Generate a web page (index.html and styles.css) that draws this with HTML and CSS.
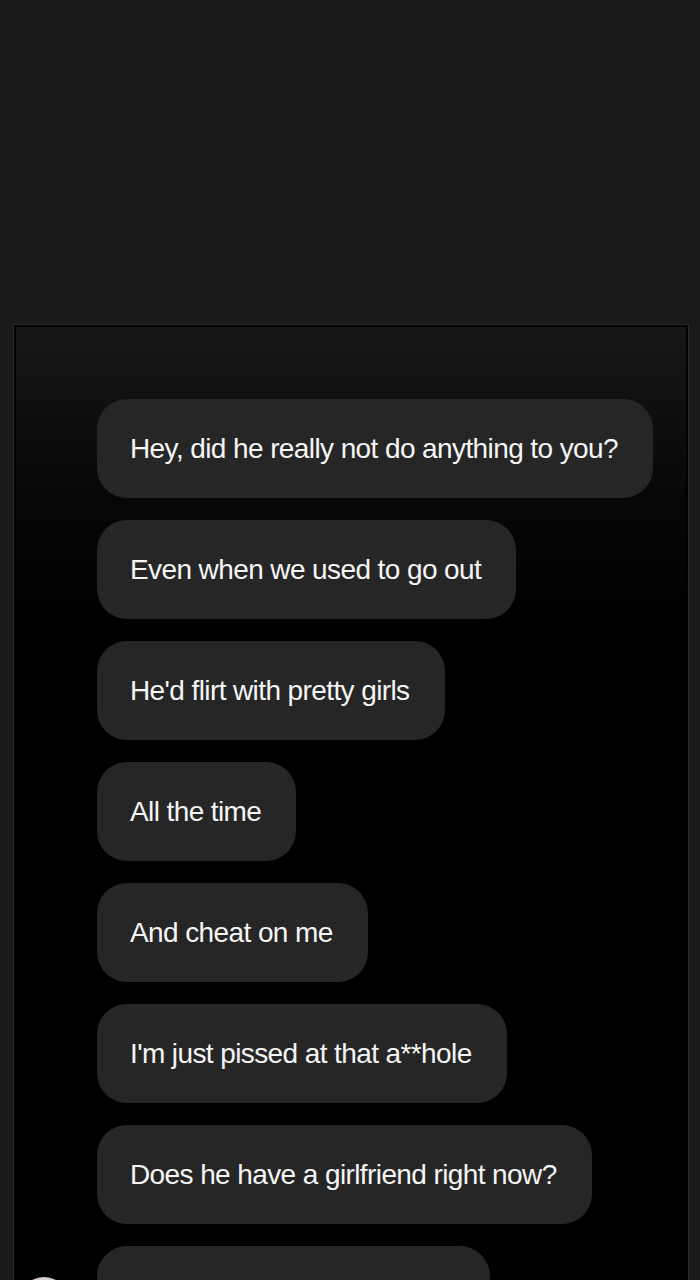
FILE: index.html
```html
<!DOCTYPE html>
<html lang="en">
<head>
  <meta charset="UTF-8">
  <meta name="viewport" content="width=device-width, initial-scale=1">
  <title>Chat</title>
  <link rel="stylesheet" href="styles.css">
</head>
<body>
  <div class="top-space"></div>

  <div class="phone">
    <div class="thread">
      <div class="row">
        <div class="slot"></div>
        <div class="bubble">Hey, did he really not do anything to you?</div>
      </div>
      <div class="row">
        <div class="slot"></div>
        <div class="bubble">Even when we used to go out</div>
      </div>
      <div class="row">
        <div class="slot"></div>
        <div class="bubble">He'd flirt with pretty girls</div>
      </div>
      <div class="row">
        <div class="slot"></div>
        <div class="bubble">All the time</div>
      </div>
      <div class="row">
        <div class="slot"></div>
        <div class="bubble">And cheat on me</div>
      </div>
      <div class="row">
        <div class="slot"></div>
        <div class="bubble">I'm just pissed at that a**hole</div>
      </div>
      <div class="row">
        <div class="slot"></div>
        <div class="bubble">Does he have a girlfriend right now?</div>
      </div>
      <div class="row">
        <div class="slot"><div class="avatar"></div></div>
        <div class="bubble empty"></div>
      </div>
    </div>
  </div>
</body>
</html>
```

FILE: styles.css
```css
body {
  margin: 0;
  background: #1a1a1a;
  font-family: "Liberation Sans", Arial, sans-serif;
  color: #f5f5f5;
  overflow: hidden;
}

.top-space {
  height: 325px;
}

/* phone screen, cut off at the bottom of the page */
.phone {
  margin-left: 14px;
  width: 670px;
  height: 953px;
  border: 2px solid #000;
  border-bottom: none;
  box-shadow: 0 0 0 1px #2a2a2a;
  background: linear-gradient(#171717, #070707 170px, #000 300px);
  overflow: hidden;
}

.thread {
  display: flex;
  flex-direction: column;
  gap: 22px;
  padding-top: 72px;
}

.row {
  display: flex;
  align-items: flex-start;
}

.slot {
  width: 81px;
  flex: none;
}

.avatar {
  width: 48px;
  height: 48px;
  margin: 31px 0 0 4px;
  border-radius: 50%;
  background: radial-gradient(circle at 50% 20%, #f2f2f2, #8a6d6d 70%);
}

.bubble {
  height: 99px;
  padding: 0 35px 0 33px;
  display: flex;
  align-items: center;
  background: #262626;
  border-radius: 30px;
  font-size: 28px;
  letter-spacing: -0.6px;
  white-space: nowrap;
}

.bubble.empty {
  width: 325px;
}
```
